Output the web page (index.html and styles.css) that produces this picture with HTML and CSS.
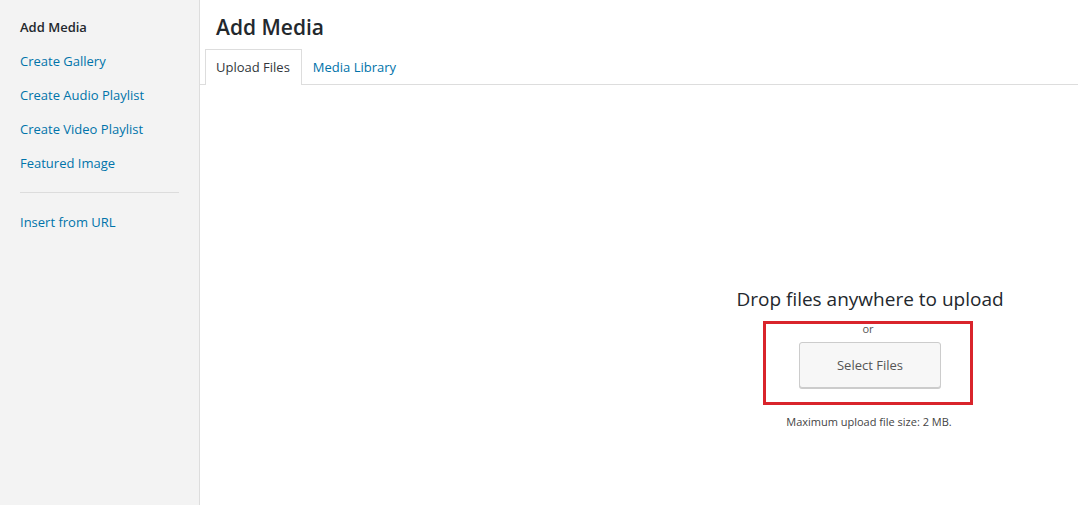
FILE: index.html
```html
<!DOCTYPE html>
<html lang="en">
<head>
<meta charset="utf-8">
<title>Add Media</title>
<link rel="stylesheet" href="styles.css">
</head>
<body>
<div class="frame">
  <nav class="menu">
    <span class="menu-item active">Add Media</span>
    <a class="menu-item" href="#">Create Gallery</a>
    <a class="menu-item" href="#">Create Audio Playlist</a>
    <a class="menu-item" href="#">Create Video Playlist</a>
    <a class="menu-item" href="#">Featured Image</a>
    <div class="separator"></div>
    <a class="menu-item" href="#">Insert from URL</a>
  </nav>
  <main class="content">
    <h1 class="title">Add Media</h1>
    <div class="tabs">
      <span class="tab active">Upload Files</span>
      <a class="tab" href="#">Media Library</a>
    </div>
    <section class="uploader">
      <div class="upload-col">
        <p class="drop-text">Drop files anywhere to upload</p>
        <div class="highlight">
          <p class="or">or</p>
          <button class="select-btn" type="button">Select Files</button>
        </div>
        <p class="max-size">Maximum upload file size: 2 MB.</p>
      </div>
    </section>
  </main>
</div>
</body>
</html>
```

FILE: styles.css
```css
* { box-sizing: border-box; }
html, body { margin: 0; padding: 0; }
body {
  font-family: "Open Sans", "Noto Sans", "Liberation Sans", sans-serif;
  color: #23282d;
  background: #fff;
  width: 1078px;
  height: 505px;
  overflow: hidden;
}
.frame {
  display: flex;
  height: 505px;
}
.menu {
  width: 200px;
  flex: none;
  background: #f3f3f3;
  border-right: 1px solid #dddddd;
  padding: 18px 0 0 20px;
  display: flex;
  flex-direction: column;
}
.menu-item {
  font-size: 13px;
  line-height: 18px;
  height: 34px;
  color: #0073aa;
  text-decoration: none;
  display: block;
}
.menu-item.active {
  color: #23282d;
  font-weight: 600;
}
.separator {
  width: 159px;
  height: 1px;
  background: #dcdcdc;
  margin: 4px 0 20px 0;
}
.content {
  flex: 1;
  display: flex;
  flex-direction: column;
  min-width: 0;
}
.title {
  margin: 0;
  padding: 12px 0 0 16px;
  font-size: 21px;
  line-height: 30px;
  font-weight: 600;
  color: #23282d;
}
.tabs {
  display: flex;
  margin-top: 7px;
  padding-left: 5px;
  border-bottom: 1px solid #dddddd;
  height: 36px;
}
.tab {
  font-size: 13px;
  line-height: 34px;
  padding: 0 11px 0 10px;
  color: #0073aa;
  text-decoration: none;
  border: 1px solid transparent;
  border-bottom: none;
  height: 36px;
}
.tab.active {
  color: #32373c;
  background: #fff;
  border-color: #dddddd;
  margin-bottom: -1px;
}
.uploader {
  padding-top: 200px;
}
.upload-col {
  width: 340px;
  margin-left: 499px;
  display: flex;
  flex-direction: column;
  align-items: center;
  text-align: center;
}
.drop-text {
  margin: 0 0 0 2px;
  font-size: 19px;
  line-height: 28px;
  color: #23282d;
  white-space: nowrap;
}
.highlight {
  margin-top: 8px;
  margin-right: 2px;
  width: 210px;
  height: 84px;
  border: 3px solid #d9242b;
  display: flex;
  flex-direction: column;
  align-items: center;
}
.or {
  margin: 0;
  font-size: 11px;
  line-height: 10px;
  color: #555;
}
.select-btn {
  margin: 8px 0 0 4px;
  width: 142px;
  height: 46px;
  font-family: inherit;
  font-size: 13px;
  color: #555;
  background: #f7f7f7;
  border: 1px solid #cccccc;
  border-radius: 3px;
  box-shadow: 0 1px 0 #cccccc;
  padding: 0;
}
.max-size {
  margin: 9px 0 0;
  font-size: 11px;
  line-height: 16px;
  color: #444;
  white-space: nowrap;
}
```
